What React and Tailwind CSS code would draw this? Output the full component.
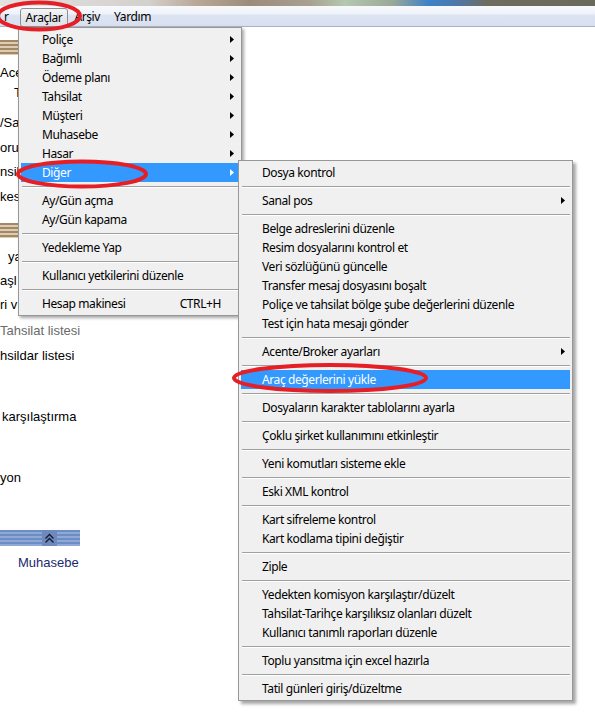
import React from "react";

const Arrow = ({ white }) => (
  <svg width="4" height="7" viewBox="0 0 4 7" className="ml-auto mr-[5px]">
    <polygon points="0,0 4,3.5 0,7" fill={white ? "#ffffff" : "#000000"} />
  </svg>
);

const Row = ({ label, arrow, active, shortcut }) => (
  <div
    className={`h-[19px] flex items-center pl-[21px] whitespace-nowrap ${
      active ? "bg-[#3399ff] text-white" : "text-black"
    }`}
  >
    <span>{label}</span>
    {shortcut && <span className="ml-auto mr-[18px]">{shortcut}</span>}
    {arrow && <Arrow white={active} />}
  </div>
);

const Sep = () => (
  <div className="h-[9px] flex flex-col justify-center pl-px">
    <div className="h-px bg-[#a0a0a0]" />
    <div className="h-px bg-white" />
  </div>
);

const mainItems = [
  { label: "Poliçe", arrow: true },
  { label: "Bağımlı", arrow: true },
  { label: "Ödeme planı", arrow: true },
  { label: "Tahsilat", arrow: true },
  { label: "Müşteri", arrow: true },
  { label: "Muhasebe", arrow: true },
  { label: "Hasar", arrow: true },
  { label: "Diğer", arrow: true, active: true },
  "sep",
  { label: "Ay/Gün açma" },
  { label: "Ay/Gün kapama" },
  "sep",
  { label: "Yedekleme Yap" },
  "sep",
  { label: "Kullanıcı yetkilerini düzenle" },
  "sep",
  { label: "Hesap makinesi", shortcut: "CTRL+H" },
];

const subItems = [
  { label: "Dosya kontrol" },
  "sep",
  { label: "Sanal pos", arrow: true },
  "sep",
  { label: "Belge adreslerini düzenle" },
  { label: "Resim dosyalarını kontrol et" },
  { label: "Veri sözlüğünü güncelle" },
  { label: "Transfer mesaj dosyasını boşalt" },
  { label: "Poliçe ve tahsilat bölge şube değerlerini düzenle" },
  { label: "Test için hata mesajı gönder" },
  "sep",
  { label: "Acente/Broker ayarları", arrow: true },
  "sep",
  { label: "Araç değerlerini yükle", active: true },
  "sep",
  { label: "Dosyaların karakter tablolarını ayarla" },
  "sep",
  { label: "Çoklu şirket kullanımını etkinleştir" },
  "sep",
  { label: "Yeni komutları sisteme ekle" },
  "sep",
  { label: "Eski XML kontrol" },
  "sep",
  { label: "Kart sifreleme kontrol" },
  { label: "Kart kodlama tipini değiştir" },
  "sep",
  { label: "Ziple" },
  "sep",
  { label: "Yedekten komisyon karşılaştır/düzelt" },
  { label: "Tahsilat-Tarihçe karşılıksız olanları düzelt" },
  { label: "Kullanıcı tanımlı raporları düzenle" },
  "sep",
  { label: "Toplu yansıtma için excel hazırla" },
  "sep",
  { label: "Tatil günleri giriş/düzeltme" },
];

const renderItems = (items) =>
  items.map((it, i) =>
    it === "sep" ? <Sep key={i} /> : <Row key={i} {...it} />
  );

const Stripe = () => (
  <div className="h-[15px] w-[18px] bg-[repeating-linear-gradient(180deg,#a48866_0px,#a48866_2px,#dccdb2_2px,#dccdb2_4px)]" />
);

export default function App() {
  return (
    <div className="relative w-[595px] h-[714px] overflow-hidden bg-white font-['Noto_Sans',sans-serif] text-[12px] tracking-[-0.4px]">
      {/* desktop strip */}
      <div className="h-[6px] bg-[linear-gradient(90deg,#e2e2e2_0%,#d4d0cc_25%,#b9a898_33%,#9c8c7c_42%,#a8a090_52%,#b4c8b0_58%,#9aa898_66%,#3f82c8_72%,#4a7ab0_76%,#6e6c5e_82%,#6a6a5c_100%)]" />
      {/* menu bar */}
      <div className="h-[21px] flex items-center border-t border-[#f6f8fb] border-b border-b-[#aab3c4] bg-[linear-gradient(180deg,#f7f9fc_0%,#eef2f9_35%,#dce4f2_45%,#d8e0ef_100%)] text-black">
        <span className="ml-[4px]">r</span>
        <div className="ml-[11px] h-[19px] mt-[2px] px-[5px] flex items-center rounded-[3px] border border-[#8e8f94] bg-[linear-gradient(180deg,#f4f5f7_0%,#e6e8ec_50%,#dfe2e8_100%)]">
          Araçlar
        </div>
        <span className="ml-[6px]">Arşiv</span>
        <span className="ml-[14px]">Yardım</span>
      </div>

      {/* background content */}
      <div className="flex flex-col w-[80px] font-['Liberation_Sans',sans-serif] text-[13px] tracking-normal leading-[16px] whitespace-nowrap text-black">
        <div className="mt-[13px]">
          <Stripe />
        </div>
        <div className="mt-[10px] h-[16px]">Ace</div>
        <div className="mt-[4px] h-[16px] pl-[14px]">T</div>
        <div className="mt-[14px] h-[16px]">/Sa</div>
        <div className="mt-[9px] h-[16px]">orur</div>
        <div className="mt-[8px] h-[16px]">nsil</div>
        <div className="mt-[9px] h-[16px]">kes</div>
        <div className="mt-[18px]">
          <Stripe />
        </div>
        <div className="mt-[11px] h-[16px] pl-[8px]">ya</div>
        <div className="mt-[8px] h-[16px]">aşl</div>
        <div className="mt-[8px] h-[16px]">ri v</div>
        <div className="mt-[10px] h-[16px] text-[#6a6a6a]">Tahsilat listesi</div>
        <div className="mt-[9px] h-[16px]">hsildar listesi</div>
        <div className="mt-[45px] h-[16px] pl-[2px]">karşılaştırma</div>
        <div className="mt-[45px] h-[16px]">yon</div>
        <div className="mt-[44px] h-[16px] w-[80px] relative bg-[repeating-linear-gradient(180deg,#6c8cc4_0px,#6c8cc4_2px,#8fa8d6_2px,#8fa8d6_4px)]">
          <div className="absolute left-[42px] top-0 w-[15px] h-[16px] bg-[#6f89bd] flex items-center justify-center">
            <svg width="11" height="11" viewBox="0 0 11 11">
              <polyline points="1.5,5.5 5.5,1.5 9.5,5.5" fill="none" stroke="#101a30" strokeWidth="1.3" />
              <polyline points="1.5,9.5 5.5,5.5 9.5,9.5" fill="none" stroke="#101a30" strokeWidth="1.3" />
            </svg>
          </div>
        </div>
        <div className="mt-[9px] h-[16px] pl-[18px] text-[#1b2a6e]">Muhasebe</div>
      </div>

      {/* main dropdown */}
      <div className="absolute left-[18px] top-[27px] w-[224px] bg-[#f0f0f0] border border-[#979797] p-[2px] shadow-[2px_2px_3px_rgba(0,0,0,0.35)]">
        {renderItems(mainItems)}
      </div>

      {/* submenu */}
      <div className="absolute left-[238px] top-[160px] w-[335px] bg-[#f0f0f0] border border-[#979797] p-[2px] shadow-[3px_3px_3px_rgba(0,0,0,0.35)]">
        {renderItems(subItems)}
      </div>

      {/* red annotation ellipses */}
      <svg className="absolute inset-0 pointer-events-none" width="595" height="714">
        <ellipse cx="39" cy="16" rx="41" ry="13.5" fill="none" stroke="#e61e25" strokeWidth="4" />
        <ellipse cx="82" cy="174" rx="64" ry="12.5" fill="none" stroke="#e61e25" strokeWidth="4" />
        <ellipse cx="330" cy="378" rx="96" ry="13" fill="none" stroke="#e61e25" strokeWidth="4" />
      </svg>
    </div>
  );
}
